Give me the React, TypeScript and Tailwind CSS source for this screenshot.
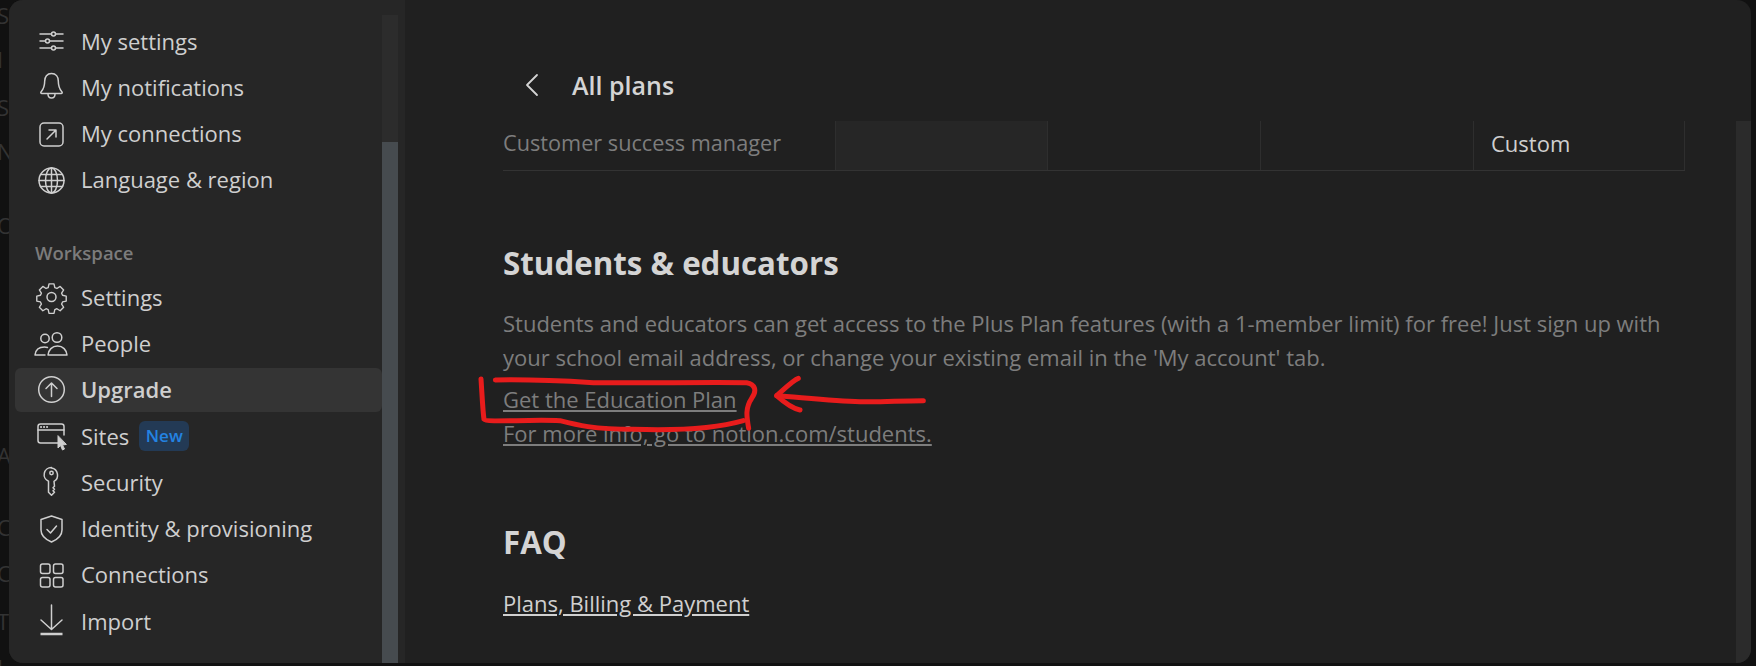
import React from "react";

const s = { fill: "none", stroke: "#cfcfcf", strokeWidth: 1.5, strokeLinecap: "round" as const, strokeLinejoin: "round" as const };

const Ico = ({ children }: { children: React.ReactNode }) => (
  <svg width="34" height="34" viewBox="0 0 34 34" className="shrink-0" {...s}>
    {children}
  </svg>
);

const icons: Record<string, React.ReactNode> = {
  sliders: (
    <>
      <path d="M6 10h11.5M21.5 10H29M6 17h5.5M15.5 17H29M6 24h11.5M21.5 24H29" />
      <circle cx="19.5" cy="10" r="2" />
      <circle cx="13.5" cy="17" r="2" />
      <circle cx="19.5" cy="24" r="2" />
    </>
  ),
  bell: (
    <>
      <path d="M17.5 3.500c-4.500 0-6.800 3.400-6.800 7.500 0 5.500-1 8-3.700 11 -.5.700-.2 1.500.8 1.500h19.400c1 0 1.300-.8.800-1.500-2.700-3-3.700-5.500-3.700-11C24.300 6.900 22 3.500 17.500 3.500z" />
      <path d="M14 24c0 2.500 1.500 4 3.500 4s3.500-1.500 3.500-4" />
    </>
  ),
  link: (
    <>
      <rect x="6" y="6" width="23" height="23" rx="4" />
      <path d="M13 22l9-9M15 13h7v7" />
    </>
  ),
  globe: (
    <>
      <circle cx="17.500" cy="17.500" r="12.500" />
      <ellipse cx="17.500" cy="17.500" rx="6" ry="12.500" />
      <path d="M17.500 5v25M5 17.500h25M6.500 11.500h22M6.500 23.500h22" />
    </>
  ),
  gear: (
    <>
      <circle cx="17.500" cy="17" r="4.500" />
      <path d="M14.800 2.800h5.400l.9 4 2.300 1 3.500-2.200 3.800 3.800-2.200 3.500 1 2.300 4 .9v5.400l-4 .9-1 2.300 2.200 3.500-3.800 3.800-3.500-2.200-2.300 1-.9 4h-5.400l-.9-4-2.300-1-3.500 2.200-3.800-3.800 2.200-3.500-1-2.300-4-.9v-5.400l4-.9 1-2.300-2.200-3.500 3.800-3.800 3.500 2.200 2.300-1z" transform="translate(1.400 1.300) scale(.92)" />
    </>
  ),
  people: (
    <>
      <circle cx="11" cy="11.500" r="4.200" />
      <circle cx="23" cy="10.500" r="4.800" />
      <path d="M1 28c.5-5 4-8 9.500-8 1 0 2 .1 3 .5M1 28h10M14 28c.5-5 4-9 9.500-9s9 4 9.500 9z" />
    </>
  ),
  up: (
    <>
      <circle cx="17.500" cy="16.500" r="12.800" />
      <path d="M17.500 23.500V10.500M12 15.500l5.500-5.500 5.500 5.500" />
    </>
  ),
  sites: (
    <>
      <path d="M26 24H6.500A2.500 2.500 0 0 1 4 21.500V7.500A2.500 2.500 0 0 1 6.500 5h21A2.500 2.500 0 0 1 30 7.500V16" />
      <path d="M4 11h26" />
      <path d="M7 8h.1M10 8h.1M13 8h.1" strokeWidth="2" />
      <path d="M24 17v12l2.500-2.500 2 4.500 2-1-2-4 3.500-.5z" fill="#cfcfcf" strokeWidth="1" />
    </>
  ),
  key: (
    <>
      <path d="M17.500 2.500a7.200 7.200 0 0 0-3 13.800v11l3 3 3-3-1.500-1.500 1.500-1.500-1.500-1.500 1.500-1.500-.5-5a7.200 7.200 0 0 0-2.500-13.300z" />
      <circle cx="17.500" cy="8" r="1.700" />
    </>
  ),
  shield: (
    <>
      <path d="M17.500 4L28 7.500V18c0 5.500-4.500 9.500-10.500 12C11.500 27.500 7 23.500 7 18V7.500z" />
      <path d="M13 17.500l3.500 3.500 6-7" />
    </>
  ),
  grid: (
    <>
      <rect x="6.500" y="6" width="9.500" height="9.500" rx="2" />
      <rect x="19.500" y="6" width="9.500" height="9.500" rx="2" />
      <rect x="6.500" y="19.500" width="9.500" height="9.500" rx="2" />
      <rect x="19.500" y="19.500" width="9.500" height="9.500" rx="2" />
    </>
  ),
  import: (
    <>
      <path d="M17.500 1v24M7 16l10.500 9.500L28 16" />
      <path d="M6.500 30h22" strokeWidth="2.500" strokeLinecap="butt" />
    </>
  ),
};

const Row = ({ icon, label, active, badge }: { icon: string; label: string; active?: boolean; badge?: boolean }) => (
  <div className={`flex h-[44px] items-center rounded-[6px] pl-[19px] ${active ? "bg-[#343434] font-semibold" : ""}`}>
    <Ico>{icons[icon]}</Ico>
    <span className="ml-[13px] text-[#cfcfcf]">{label}</span>
    {badge && (
      <span className="ml-[10px] flex h-[30px] w-[50px] items-center justify-center rounded-[6px] bg-[#233a55] text-[17px] font-semibold text-[#2383e2]">
        New
      </span>
    )}
  </div>
);

const ghost = [
  ["S", 0], ["I", 44], ["S", 92], ["N", 136], ["O", 210], ["A", 440], ["C", 512], ["C", 558], ["T", 606], ["I", 652],
] as const;

export default function App() {
  return (
    <div
      className="relative flex h-[666px] w-[1756px] overflow-hidden bg-[#111111] pb-[3px] pl-[9px] pr-[5px] text-[22px]"
      style={{ fontFamily: '"Open Sans", "Noto Sans", sans-serif' }}
    >
      {ghost.map(([c, y], i) => (
        <span key={i} className="absolute left-[-3px] text-[22px] leading-[30px] text-[#333333]" style={{ top: y }}>
          {c}
        </span>
      ))}

      <div className="relative flex h-full w-full overflow-hidden rounded-[14px] bg-[#202020]">
        {/* Sidebar */}
        <aside className="flex h-full w-[396px] shrink-0 bg-[#262626] pt-[15px]">
          <nav className="flex w-[373px] flex-col gap-[2.25px] pl-[6px] pt-[4px]">
            <Row icon="sliders" label="My settings" />
            <Row icon="bell" label="My notifications" />
            <Row icon="link" label="My connections" />
            <Row icon="globe" label="Language & region" />
            <div className="mb-[8px] mt-[37px] flex h-[24px] items-center pl-[20px] text-[18.500px] font-semibold text-[#7c7c7c]">
              Workspace
            </div>
            <Row icon="gear" label="Settings" />
            <Row icon="people" label="People" />
            <Row icon="up" label="Upgrade" active />
            <Row icon="sites" label="Sites" badge />
            <Row icon="key" label="Security" />
            <Row icon="shield" label="Identity & provisioning" />
            <Row icon="grid" label="Connections" />
            <Row icon="import" label="Import" />
          </nav>
          <div className="flex h-full w-[16px] flex-col bg-[#2c2c2c]">
            <div className="h-[127px]" />
            <div className="flex-1 bg-[#464b4f]" />
          </div>
          <div className="flex-1 bg-[#262626]" />
        </aside>

        {/* Main */}
        <main className="relative flex h-full flex-1 flex-col">
          <div className="flex h-[121px] shrink-0 items-start pl-[119px] pt-[73px]">
            <svg width="16" height="24" viewBox="0 0 16 24" fill="none" stroke="#d4d4d4" strokeWidth="1.800" strokeLinecap="round" strokeLinejoin="round">
              <path d="M13 2L3 12l10 10" />
            </svg>
            <h2 className="ml-[32px] mt-[-5px] text-[25px] font-semibold leading-[34px] text-[#d4d4d4]">All plans</h2>
          </div>

          <div className="ml-[98px] mr-[47px] flex flex-col">
            <div className="flex h-[50px] w-[1182px] border-b border-[#333333]">
              <div className="flex w-[332px] items-center pb-[5px] text-[21.700px] text-[#7d7d7d]">Customer success manager</div>
              <div className="w-[212px] border-l border-[#2e2e2e] bg-[#262626]" />
              <div className="w-[213px] border-l border-[#2e2e2e]" />
              <div className="w-[213px] border-l border-[#2e2e2e]" />
              <div className="flex flex-1 items-center border-x border-[#2e2e2e] pb-[5px] pl-[17px] text-[#cfcfcf]">Custom</div>
            </div>

            <h3 className="mt-[68px] text-[31.300px] font-bold leading-[48px] text-[#d4d4d4]">Students &amp; educators</h3>
            <p className="mt-[19px] whitespace-nowrap leading-[34px] text-[#7d7d7d]">
              Students and educators can get access to the Plus Plan features (with a 1-member limit) for free! Just sign up with
              <br />
              your school email address, or change your existing email in the 'My account' tab.
            </p>
            <div className="mt-[8px] flex flex-col items-start leading-[34px] text-[#7d7d7d]">
              <a className="underline">Get the Education Plan</a>
              <a className="underline">For more info, go to notion.com/students.</a>
            </div>

            <h3 className="mt-[68px] text-[31.300px] font-bold leading-[48px] text-[#d4d4d4]">FAQ</h3>
            <a className="mt-[20px] self-start leading-[34px] text-[#d0d0d0] underline">Plans, Billing &amp; Payment</a>
          </div>

          <div className="absolute bottom-0 right-0 top-[121px] w-[15px] bg-[#2b2b2b]" />
        </main>
      </div>

      {/* Hand-drawn red annotation */}
      <svg
        className="absolute left-[460px] top-[360px]"
        width="520"
        height="120"
        viewBox="0 0 1560 360"
        fill="none"
        stroke="#e81c1c"
        strokeWidth="15"
        strokeLinecap="round"
        strokeLinejoin="round"
      >
        <path d="M63 57C66 100 68 150 72 178C78 188 200 178 300 182C350 195 400 208 520 208C640 212 760 208 850 182" />
        <path d="M106 60C200 58 300 62 400 68C560 70 720 66 860 68C885 72 892 92 875 115C855 145 860 170 866 205" />
        <path d="M1390 122C1320 122 1260 127 1200 125C1120 122 1020 112 950 107" />
        <path d="M1015 55C1000 60 975 85 950 107C970 125 995 145 1020 150" />
      </svg>
    </div>
  );
}
